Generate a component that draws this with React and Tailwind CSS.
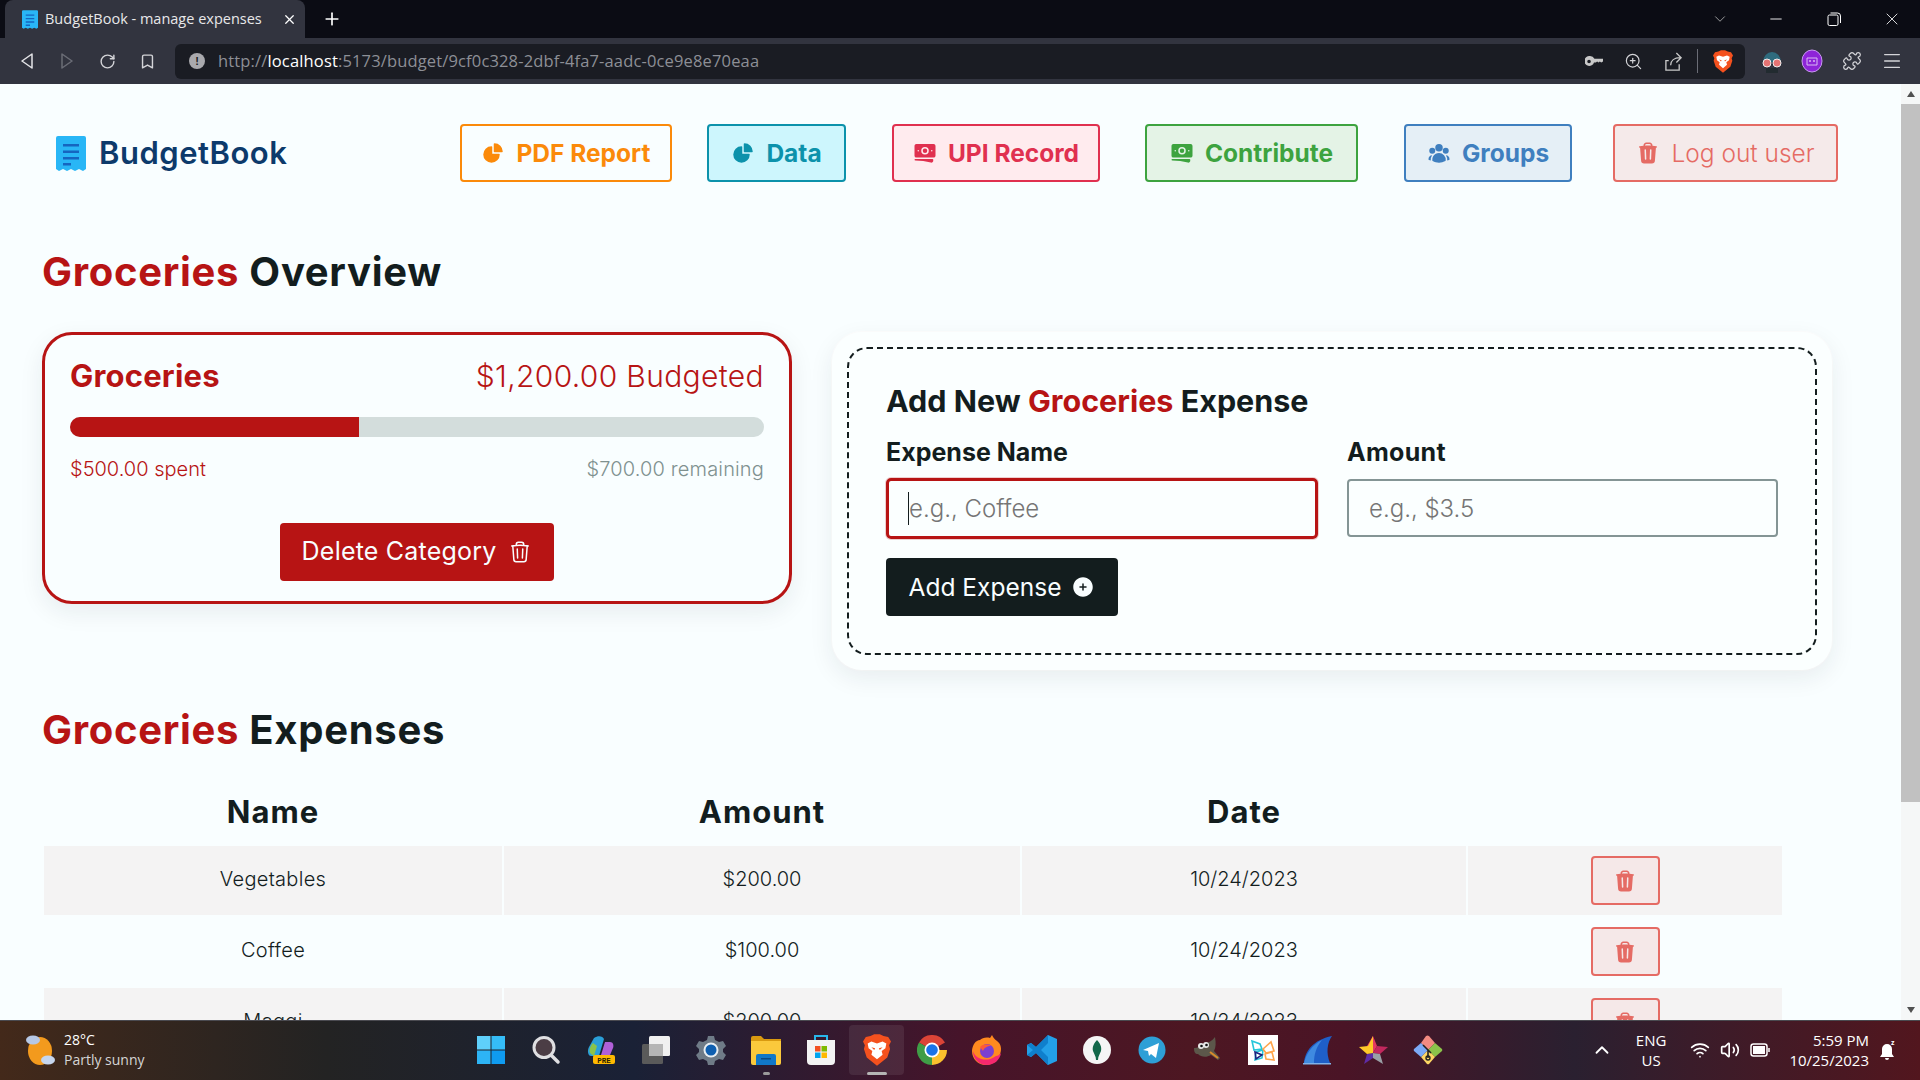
import React from 'react';
import { ChevronDown, Menu, Minus, Plus, Puzzle, RotateCw, Bookmark, X, ZoomIn, ChevronUp, Wifi, Volume2 } from 'lucide-react';
import { HiBanknotes, HiChartPie, HiOutlineTrash, HiPlusCircle, HiTrash, HiUserGroup } from 'react-icons/hi2';

function ReceiptLogo({ className }) {
  return (
    <svg viewBox="0 0 30 35" className={className}>
      <path d="M2 0h26a2 2 0 0 1 2 2v31l-3 2-4-2-4 2-4-2-4 2-4-2-4 2-3-2V2a2 2 0 0 1 2-2z" fill="#29b6f6" />
      <path d="M7 8h16v2.5H7zM7 14.5h16V17H7zM7 21h16v2.5H7zM7 27h8v2.5H7z" fill="#1565c0" />
    </svg>
  );
}

function BraveIcon({ className }) {
  return (
    <svg viewBox="0 0 30 34" className={className}>
      <path d="M8 2l4-2h6l4 2 5 1 3 5-2 4 1 4-3 9-11 9-11-9-3-9 1-4-2-4 3-5z" fill="#f4511e" />
      <path d="M9 8l6 2 6-2 4 2-1 5-4 3 1 4-6 5-6-5 1-4-4-3-1-5z" fill="#fff" />
      <path d="M9 14l4 1-1 2zM21 14l-4 1 1 2z" fill="#f4511e" />
    </svg>
  );
}

function Chrome() {
  return (
    <svg viewBox="0 0 30 30" className="w-[30px] h-[30px]">
      <path d="M15 15L2 7.5A15 15 0 0 1 28 7.5z" fill="#db4437" />
      <path d="M15 15h15A15 15 0 0 1 15 30z" fill="#fbc02d" />
      <path d="M15 15L15 30A15 15 0 0 1 2 7.5z" fill="#3f9d46" />
      <circle cx="15" cy="15" r="7.5" fill="#fff" />
      <circle cx="15" cy="15" r="5.8" fill="#1a73e8" />
    </svg>
  );
}

const appIcons = [
  <svg key="win" viewBox="0 0 30 30" className="w-[30px] h-[30px]">
    <path d="M1 1h13.5v13.5H1z" fill="#5fd0fb" /><path d="M15.5 1H29v13.5H15.5z" fill="#35bdf8" />
    <path d="M1 15.5h13.5V29H1z" fill="#2db4f5" /><path d="M15.5 15.5H29V29H15.5z" fill="#0f9bf0" />
  </svg>,
  <svg key="search" viewBox="0 0 30 30" className="w-[30px] h-[30px]">
    <circle cx="13" cy="12.5" r="10" fill="#4b3d45" stroke="#dfdfe2" strokeWidth="3" />
    <path d="M20.5 20.5L27 27" stroke="#dfdfe2" strokeWidth="3.5" strokeLinecap="round" />
  </svg>,
  <svg key="copilot" viewBox="0 0 30 30" className="w-[30px] h-[30px]">
    <path d="M8 3c4-3 9-2 10 1l-5 17H5C2 21 1 16 3 12z" fill="#2a9fd8" />
    <path d="M5 19c-3-2-1-8 2-11l4 3-3 10z" fill="#8bc34a" />
    <path d="M19 7h5c3 0 4 3 3 6l-3 7h-9z" fill="#b160d8" />
    <rect x="7" y="20" width="22" height="9" rx="2" fill="#ffb900" />
    <text x="18" y="27.5" fontSize="7.5" fontWeight="700" textAnchor="middle" fill="#2b2100" fontFamily="Liberation Mono, monospace">PRE</text>
  </svg>,
  <svg key="task" viewBox="0 0 30 30" className="w-[30px] h-[30px]">
    <rect x="8" y="1" width="21" height="20" rx="1.5" fill="#f0f0f0" />
    <rect x="1" y="9" width="21" height="20" rx="1.5" fill="#5a5a5a" />
    <rect x="8" y="9" width="14" height="12" fill="#b5b5b5" />
  </svg>,
  <svg key="settings" viewBox="0 0 30 30" className="w-[30px] h-[30px]">
    <path d="M12 1h6l1 4 4 2 4-1 3 5-3 3v3l3 3-3 5-4-1-4 2-1 4h-6l-1-4-4-2-4 1-3-5 3-3v-3L0 11l3-5 4 1 4-2z" fill="#6f7b87" />
    <circle cx="15" cy="15" r="7.5" fill="#e8eef2" /><circle cx="15" cy="15" r="5.5" fill="#0f5fb0" />
  </svg>,
  <svg key="explorer" viewBox="0 0 30 30" className="w-[30px] h-[30px]">
    <path d="M0 3a2 2 0 0 1 2-2h8l3 3h17v5H0z" fill="#d99a10" />
    <path d="M0 6h30v22a2 2 0 0 1-2 2H2a2 2 0 0 1-2-2z" fill="#fbc93c" />
    <path d="M5 21a2 2 0 0 1 2-2h16a2 2 0 0 1 2 2v9H5z" fill="#1178c8" />
    <path d="M10 23h10v1.5H10z" fill="#0a4a86" />
  </svg>,
  <svg key="store" viewBox="0 0 30 30" className="w-[30px] h-[30px]">
    <path d="M9 6V1h12v5" fill="none" stroke="#28b6ea" strokeWidth="2" />
    <path d="M1 5h28v21a4 4 0 0 1-4 4H5a4 4 0 0 1-4-4z" fill="#f3f3f3" />
    <path d="M9 11h5.5v5.5H9z" fill="#f25022" /><path d="M15.5 11H21v5.5h-5.5z" fill="#7fba00" />
    <path d="M9 17.5h5.5V23H9z" fill="#00a4ef" /><path d="M15.5 17.5H21V23h-5.5z" fill="#ffb900" />
  </svg>,
  <BraveIcon key="brave" className="w-[28px] h-[32px]" />,
  <Chrome key="chrome" />,
  <svg key="firefox" viewBox="0 0 30 30" className="w-[30px] h-[30px]">
    <path d="M2 9c2-3 4-4 6-4 2-2 6-3 10-2l2-3c1 2 2 4 5 6 4 3 5 8 3 13-2 7-8 11-14 11C6 30 0 24 0 16c0-3 1-5 2-7z" fill="#ff8a1f" />
    <path d="M15 30C7 30 1 24 1 16c2 8 14 12 23 5 2 0 4-2 5-3-1 7-7 12-14 12z" fill="#f5286e" />
    <circle cx="15" cy="16" r="7" fill="#7b3fd0" /><path d="M8 12c3-3 8-3 11-1-4 0-7 2-8 5z" fill="#ff5a36" />
  </svg>,
  <svg key="vscode" viewBox="0 0 30 30" className="w-[30px] h-[30px]">
    <path d="M21 0l9 4v22l-9 4-12-12-5 4-4-2v-10l4-2 5 4z" fill="#23a0e8" />
    <path d="M21 0v30L9 18l-5 4-4-2 6-5-6-5 4-2 5 4zM21 8l-7 7 7 7z" fill="#0f7fcc" />
  </svg>,
  <svg key="mongo" viewBox="0 0 30 30" className="w-[30px] h-[30px]">
    <circle cx="15" cy="15" r="14" fill="#f5f5f5" />
    <path d="M15 5c3 3 5 7 4 11-1 3-3 5-3 9h-2c0-4-2-6-3-9-1-4 1-8 4-11z" fill="#13684a" />
  </svg>,
  <svg key="telegram" viewBox="0 0 30 30" className="w-[30px] h-[30px]">
    <circle cx="15" cy="15" r="13.5" fill="#2e9fd6" />
    <path d="M6 15l16-7-3 15-5-4-2 2-1-5z" fill="#fff" />
  </svg>,
  <svg key="gimp" viewBox="0 0 30 30" className="w-[30px] h-[30px]">
    <path d="M2 13c4 0 6-2 9-4 5-1 9-3 12-7 1 6 1 10-1 14l6 7-2 2-7-5c-5 3-10 2-13-1-3 0-4-2-4-6z" fill="#5c574a" />
    <circle cx="9" cy="11" r="3" fill="#e8e8e8" /><circle cx="14" cy="10" r="3" fill="#e8e8e8" />
    <circle cx="9.5" cy="11" r="1.3" fill="#111" /><circle cx="14.5" cy="10" r="1.3" fill="#111" />
    <path d="M18 17l8 6" stroke="#d98b2b" strokeWidth="2" />
  </svg>,
  <svg key="zoho" viewBox="0 0 30 30" className="w-[30px] h-[30px]">
    <rect width="30" height="30" fill="#fff" />
    <path d="M4 6l8 3 2 5-8 1zM8 17l7-2-1 8-7 2z" fill="none" stroke="#26c6da" strokeWidth="1.6" />
    <path d="M15 14l8-7 3 9-8 2zM17 19l7-2 2 8-8-1z" fill="none" stroke="#ffa54c" strokeWidth="1.6" />
    <path d="M7 17l7 3-6 4z" fill="none" stroke="#1a237e" strokeWidth="1.6" />
  </svg>,
  <svg key="shark" viewBox="0 0 30 30" className="w-[30px] h-[30px]">
    <path d="M1 28C2 16 10 5 29 1c-5 7-6 17-2 27z" fill="#1f5fc8" />
    <path d="M1 28c2-9 8-18 18-23-6 7-8 15-8 23z" fill="#3f8ae0" />
    <path d="M0 28h28v1.5H0z" fill="#7fb2ea" />
  </svg>,
  <svg key="star" viewBox="0 0 30 30" className="w-[30px] h-[30px]">
    <path d="M15 1l4 10-4 7-6-7z" fill="#e53960" />
    <path d="M19 11l11 1-8 7-7-1z" fill="#c2285d" />
    <path d="M15 18l7 1 3 10-10-6z" fill="#9aa0a6" />
    <path d="M15 18v5l-9 6 3-10z" fill="#5e2ca5" />
    <path d="M15 1v17l-6 1-8-7 9-1z" fill="#ffc928" />
  </svg>,
  <svg key="kite" viewBox="0 0 30 30" className="w-[30px] h-[30px]">
    <path d="M15 15L8 8l5-7a3 3 0 0 1 3 0l6 7z" fill="#f28b82" />
    <path d="M15 15l7-7 7 6a2 2 0 0 1 0 2l-7 6z" fill="#8bc34a" />
    <path d="M15 15l7 7-6 7a2 2 0 0 1-2 0l-6-7z" fill="#fdd663" />
    <path d="M15 15l-7 7-7-6a2 2 0 0 1 0-2l7-6z" fill="#7baaf7" />
    <path d="M10 10l8 8M15 15v8" stroke="#222" strokeWidth="1.6" /><circle cx="15" cy="23" r="2" fill="none" stroke="#222" strokeWidth="1.4" />
  </svg>,
];

function TitleBar() {
  return (
    <div className="h-[38px] shrink-0 bg-[#0b0c14] flex items-end text-white">
      <div className="ml-[5px] w-[300px] h-[38px] bg-[#32343f] rounded-t-lg flex items-center pl-[17px] pr-[8px]">
        <ReceiptLogo className="w-[16px] h-[19px] shrink-0" />
        <span className="ml-[7px] w-[220px] overflow-hidden whitespace-nowrap text-[14.5px] text-[#e8e8ea] font-['Open_Sans',sans-serif]">BudgetBook - manage expenses</span>
        <X size={15} className="ml-auto text-white" />
      </div>
      <Plus size={20} className="ml-[17px] mb-[9px] text-white" />
      <div className="ml-auto flex items-center h-[38px] pr-[18px]">
        <ChevronDown size={18} strokeWidth={1} className="text-[#c8c8c8]" />
        <Minus size={18} strokeWidth={1.2} className="ml-[38px] text-white" />
        <svg viewBox="0 0 14 14" className="ml-[42px] w-[14px] h-[14px]" fill="none" stroke="#fff" strokeWidth="1">
          <rect x="1" y="3" width="10" height="10.5" rx="1.5" /><path d="M3.5 1h7a3 3 0 0 1 3 3v7" />
        </svg>
        <X size={20} strokeWidth={1} className="ml-[41px] text-white" />
      </div>
    </div>
  );
}

function ToolBar() {
  return (
    <div className="h-[46px] shrink-0 bg-[#32343f] flex items-center text-[#d4d4d8]">
      <div className="w-[175px] flex items-center shrink-0">
        <svg viewBox="0 0 12 16" className="ml-[21px] w-[12px] h-[16px]" fill="none" stroke="#e4e4e7" strokeWidth="1.5"><path d="M11 1L1 8l10 7z" strokeLinejoin="round" /></svg>
        <svg viewBox="0 0 12 16" className="ml-[28px] w-[12px] h-[16px]" fill="none" stroke="#6b6d76" strokeWidth="1.5"><path d="M1 1l10 7-10 7z" strokeLinejoin="round" /></svg>
        <RotateCw size={17} className="ml-[26px]" />
        <Bookmark size={17} className="ml-[23px]" />
      </div>
      <div className="w-[1570px] h-[35px] shrink-0 bg-[#1a1c23] rounded-md flex items-center pl-[14px] pr-[12px]">
        <div className="w-[16px] h-[16px] rounded-full bg-[#a9a9ad] flex items-center justify-center text-[11px] font-bold text-[#1a1c23] font-['Liberation_Sans',sans-serif]">!</div>
        <div className="ml-[13px] text-[16.5px] tracking-[0.15px] text-[#8d8f96] font-['Open_Sans',sans-serif] whitespace-nowrap">http://<span className="text-white">localhost</span>:5173/budget/9cf0c328-2dbf-4fa7-aadc-0ce9e8e70eaa</div>
        <div className="ml-auto flex items-center">
          <svg viewBox="0 0 20 12" className="w-[18px] h-[11px]" fill="#c8c8c8"><path d="M5.5 0a5.5 5.5 0 0 1 5 3H20v3l-2 1-1.500-1-1.500 1-1.500-1-1.500 1h-2a5.500 5.500 0 1 1-4.500-7zM4.500 4a2 2 0 1 0 0 4 2 2 0 0 0 0-4z" /></svg>
          <ZoomIn size={19} strokeWidth={1.5} className="ml-[21px]" />
          <svg viewBox="0 0 20 20" className="ml-[21px] w-[19px] h-[19px]" fill="none" stroke="#c8c8c8" strokeWidth="1.4"><path d="M5 9H2v10h14v-6M7 14c0-5 4-8 10-8M13 1l5 5-5 5" /></svg>
          <div className="ml-[14px] w-[1px] h-[24px] bg-[#6b6d76]" />
          <BraveIcon className="ml-[15px] w-[20px] h-[25px]" />
        </div>
      </div>
      <div className="flex items-center ml-[15px]">
        <svg viewBox="0 0 24 26" className="w-[24px] h-[26px] shrink-0">
          <path d="M3 14a9 10 0 0 1 18 0z" fill="#2f6b7e" />
          <circle cx="7" cy="15" r="4" fill="#e57373" stroke="#eee" /><circle cx="17" cy="15" r="4" fill="#e57373" stroke="#eee" />
          <path d="M6 20h12v5H6z" fill="#222b30" />
        </svg>
        <svg viewBox="0 0 22 24" className="ml-[17px] w-[22px] h-[24px] shrink-0">
          <ellipse cx="11" cy="12" rx="10" ry="11" fill="#8e24d8" stroke="#c89af0" />
          <path d="M6 9h10v7H6z" fill="none" stroke="#d9b8f5" /><path d="M8 12h2M12 12h2" stroke="#fff" />
        </svg>
        <Puzzle size={20} strokeWidth={1.5} className="ml-[19px] shrink-0" />
        <Menu size={22} strokeWidth={1.5} className="ml-[19px] shrink-0" />
      </div>
    </div>
  );
}

const navButtons = [
  { label: 'PDF Report', Icon: HiChartPie, box: 'w-[212px] font-bold border-[#fb8a0a] text-[#fb8a0a]' },
  { label: 'Data', Icon: HiChartPie, box: 'w-[139px] ml-[35px] font-bold border-[#0c92ab] bg-[#cdf6fd] text-[#0c92ab]' },
  { label: 'UPI Record', Icon: HiBanknotes, box: 'w-[208px] ml-[46px] font-bold border-[#e0304f] bg-[#ffebee] text-[#e0304f]' },
  { label: 'Contribute', Icon: HiBanknotes, box: 'w-[213px] ml-[45px] font-bold border-[#3da33f] bg-[#e4f3e6] text-[#3da33f]' },
  { label: 'Groups', Icon: HiUserGroup, box: 'w-[168px] ml-[46px] font-bold border-[#3f7fbf] bg-[#e5eff6] text-[#3f7fbf]' },
  { label: 'Log out user', Icon: HiTrash, box: 'w-[225px] ml-[41px] font-light border-[#e56b64] bg-[#f5eaea] text-[#e56b64]' },
];

function Nav() {
  return (
    <nav className="flex items-center">
      <div className="flex items-center ml-[14px] w-[404px] shrink-0">
        <ReceiptLogo className="w-[30px] h-[35px]" />
        <span className="ml-[13px] text-[31px] font-semibold text-[#0d3a6b] tracking-[0.5px]">BudgetBook</span>
      </div>
      {navButtons.map(({ label, Icon, box }) => (
        <button key={label} className={`h-[58px] shrink-0 border-2 rounded-[4px] flex items-center justify-center gap-[11px] text-[24.5px] ${box}`}>
          <Icon size={24} />
          {label}
        </button>
      ))}
    </nav>
  );
}

const expenses = [
  { name: 'Vegetables', amount: '$200.00', date: '10/24/2023' },
  { name: 'Coffee', amount: '$100.00', date: '10/24/2023' },
  { name: 'Maggi', amount: '$200.00', date: '10/24/2023' },
];

export default function App() {
  return (
    <div className="h-screen flex flex-col overflow-hidden bg-[#f9feff] text-[#131d1e] font-['Inter',sans-serif]">
      <TitleBar />
      <ToolBar />

      <div className="flex-1 min-h-0 flex">
        <main className="flex-1 min-w-0 overflow-hidden pl-[42px] pt-[40px]">
          <Nav />

          <h1 className="mt-[65px] text-[40px] leading-[50px] font-bold tracking-[0.7px]">
            <span className="text-[#b71414]">Groceries</span> Overview
          </h1>

          <div className="mt-[35px] flex items-start">
            {/* Budget card */}
            <div className="w-[750px] h-[272px] shrink-0 border-[3px] border-[#b71414] rounded-[30px] px-[25px] pt-[17px] shadow-[0_8px_24px_rgba(20,40,50,0.08)]">
              <div className="flex items-center justify-between text-[#b71414] h-[48px]">
                <span className="text-[31px] font-bold tracking-[0.2px]">Groceries</span>
                <span className="text-[30px] font-light tracking-[0.35px]">$1,200.00 Budgeted</span>
              </div>
              <div className="mt-[17px] h-[20px] rounded-full bg-[#d3dddc] overflow-hidden">
                <div className="h-full w-[41.67%] bg-[#b71414]" />
              </div>
              <div className="mt-[17px] flex justify-between text-[20px] font-light">
                <span className="text-[#b71414]">$500.00 spent</span>
                <span className="text-[#7f9190] tracking-[0.15px]">$700.00 remaining</span>
              </div>
              <div className="mt-[39px] flex justify-center">
                <button className="w-[274px] h-[58px] rounded-[4px] bg-[#b71414] text-[#f9feff] text-[25px] tracking-[0.2px] flex items-center justify-center gap-[12px]">
                  Delete Category
                  <HiOutlineTrash size={24} />
                </button>
              </div>
            </div>

            {/* Add expense form */}
            <div className="ml-[40px] w-[1000px] h-[338px] shrink-0 rounded-[30px] p-[15px] shadow-[0_8px_24px_rgba(20,40,50,0.08),0_0_0_1px_rgba(255,255,255,0.8)] bg-[#fbffff]">
              <div className="h-full border-2 border-dashed border-[#131d1e] rounded-[20px] pl-[37px] pr-[30px] pt-[33px]">
                <h2 className="text-[30.5px] leading-[38px] font-bold">
                  Add New <span className="text-[#b71414]">Groceries</span> Expense
                </h2>
                <div className="mt-[17px] flex gap-[29px]">
                  <label className="w-[432px] block">
                    <span className="block text-[25px] leading-[30px] font-bold">Expense Name</span>
                    <span className="relative block mt-[11px]">
                      <input placeholder="e.g., Coffee" className="w-full h-[61px] border-[3px] border-[#b71414] rounded-[5px] pl-[20px] text-[24px] font-light outline-none placeholder:text-[#757575] bg-transparent shadow-[0_0_0_1px_rgba(183,20,20,0.2)]" />
                      <span className="absolute left-[22px] top-[14px] w-[1px] h-[33px] bg-[#131d1e]" />
                    </span>
                  </label>
                  <label className="w-[431px] block">
                    <span className="block text-[25px] leading-[30px] font-bold tracking-[0.3px]">Amount</span>
                    <input placeholder="e.g., $3.5" className="mt-[12px] w-full h-[58px] border-2 border-[#849595] rounded-[4px] pl-[20px] text-[24px] font-light outline-none placeholder:text-[#757575] bg-transparent" />
                  </label>
                </div>
                <button className="mt-[19px] w-[232px] h-[58px] rounded-[4px] bg-[#131d1e] text-[#f9feff] text-[24.5px] flex items-center justify-center gap-[10px]">
                  Add Expense
                  <HiPlusCircle size={24} />
                </button>
              </div>
            </div>
          </div>

          <h2 className="mt-[35px] text-[40px] leading-[50px] font-bold tracking-[0.7px]">
            <span className="text-[#b71414]">Groceries</span> Expenses
          </h2>

          <table className="mt-[23px] w-[1740px] table-fixed border-separate border-spacing-[2px]">
            <colgroup>
              <col className="w-[458px]" /><col className="w-[516px]" /><col className="w-[444px]" /><col className="w-[314px]" />
            </colgroup>
            <thead>
              <tr className="h-[64px] text-[31px] text-center">
                <th className="font-bold tracking-[1px]">Name</th>
                <th className="font-bold tracking-[1px]">Amount</th>
                <th className="font-bold tracking-[1px]">Date</th>
                <th />
              </tr>
            </thead>
            <tbody>
              {expenses.map((e, i) => (
                <tr key={e.name} className={`h-[69px] text-[20px] font-light text-center ${i % 2 === 0 ? 'bg-[#f4f3f3]' : ''}`}>
                  <td className="pb-[4px] tracking-[0.3px]">{e.name}</td>
                  <td className="pb-[4px]">{e.amount}</td>
                  <td className="pb-[4px]">{e.date}</td>
                  <td>
                    <button className="mx-auto w-[69px] h-[49px] border-2 border-[#e56b64] rounded-[4px] bg-[#f5e8e8] text-[#e56b64] flex items-center justify-center">
                      <HiTrash size={24} />
                    </button>
                  </td>
                </tr>
              ))}
            </tbody>
          </table>
        </main>

        {/* Scrollbar */}
        <div className="w-[19px] shrink-0 bg-[#f5f7f7] flex flex-col items-stretch">
          <div className="h-[20px] flex items-center justify-center"><div className="w-0 h-0 border-x-[4px] border-x-transparent border-b-[6px] border-b-[#505050]" /></div>
          <div className="h-[698px] bg-[#c1c1c1]" />
          <div className="mt-auto h-[20px] flex items-center justify-center"><div className="w-0 h-0 border-x-[4px] border-x-transparent border-t-[6px] border-t-[#505050]" /></div>
        </div>
      </div>

      {/* Taskbar */}
      <footer className="h-[60px] shrink-0 border-t border-[#4a4a50] pb-[1px] flex items-center text-white font-['Open_Sans',sans-serif] bg-[linear-gradient(90deg,#43291a_0%,#232323_17%,#1a2136_33%,#46142a_50%,#4d1722_62%,#4a1426_70%,#2a2030_82%,#3a1c2a_88%,#52161e_100%)]">
        <div className="w-[463px] shrink-0 flex items-center pl-[24px]">
          <svg viewBox="0 0 32 34" className="w-[32px] h-[34px]">
            <ellipse cx="16" cy="18" rx="12" ry="14" fill="#f39a1d" />
            <ellipse cx="9" cy="7" rx="7" ry="4.500" fill="#b6c8e6" />
            <ellipse cx="24" cy="27" rx="7" ry="4.500" fill="#c6d6ee" />
          </svg>
          <div className="ml-[8px] text-[14px] leading-[20px]">
            <div>28°C</div>
            <div className="text-[#d5d5d5]">Partly sunny</div>
          </div>
        </div>
        <div className="flex items-center">
          {appIcons.map((icon, i) => (
            <div key={i} className={`relative w-[55.15px] h-[50px] flex items-center justify-center rounded ${i === 7 ? 'bg-[#ffffff14]' : ''}`}>
              {icon}
              {i === 5 && <span className="absolute bottom-[0px] w-[7px] h-[3px] rounded-full bg-[#9a9a9a]" />}
              {i === 7 && <span className="absolute bottom-[0px] w-[20px] h-[3px] rounded-full bg-[#b5b5b5]" />}
            </div>
          ))}
        </div>
        <div className="ml-auto flex items-center pr-[24px]">
          <ChevronUp size={22} />
          <div className="ml-[23px] text-[15px] leading-[20px] text-center">
            <div>ENG</div>
            <div>US</div>
          </div>
          <Wifi size={20} className="ml-[24px]" />
          <Volume2 size={20} className="ml-[10px]" />
          <svg viewBox="0 0 20 14" className="ml-[10px] w-[20px] h-[14px]" fill="none" stroke="#fff" strokeWidth="1.5"><rect x="1" y="1" width="16" height="12" rx="2.500" /><rect x="3" y="3" width="12" height="8" fill="#fff" stroke="none" /><path d="M19 5v4" /></svg>
          <div className="ml-[19px] text-[15px] leading-[20px] text-right">
            <div>5:59 PM</div>
            <div>10/25/2023</div>
          </div>
          <svg viewBox="0 0 16 22" className="ml-[11px] w-[16px] h-[22px]" fill="#fff">
            <path d="M7 5a5 5 0 0 1 5 5v5l2 3H0l2-3v-5a5 5 0 0 1 5-5zM5 19h4a2 2 0 0 1-4 0z" />
            <text x="11" y="6" fontSize="7" fontWeight="700">z</text>
          </svg>
        </div>
      </footer>
    </div>
  );
}
